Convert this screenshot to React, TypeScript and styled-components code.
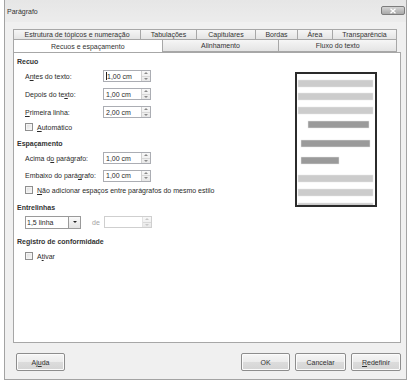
import React from 'react';
import styled, { createGlobalStyle } from 'styled-components';

const Global = createGlobalStyle`
  html, body { margin: 0; padding: 0; background: #ffffff; }
  body {
    font-family: "Liberation Sans", Arial, sans-serif;
    font-size: 7px;
    color: #2a2a2a;
  }
  * { box-sizing: border-box; }
`;

const Screen = styled.div`
  width: 414px;
  height: 383px;
  padding-left: 4px;
  background: #ffffff;
`;

const Window = styled.div`
  width: 403px;
  height: 380px;
  border: 1px solid #a3a3a3;
  border-top: none;
  background: #f0f0f0;
  display: flex;
  flex-direction: column;
`;

const TitleBar = styled.div`
  height: 22px;
  display: flex;
  justify-content: space-between;
  align-items: flex-start;
  padding: 0 1px 0 2px;
  background: linear-gradient(#e6e6e6, #ececec);
`;

const Title = styled.span`
  margin-top: 8px;
  font-size: 7px;
  color: #333;
`;

const CloseButton = styled.div`
  width: 24px;
  height: 9px;
  margin-top: 6px;
  border: 1px solid #7c7c7c;
  border-radius: 2px;
  background: linear-gradient(#d4d4d4, #a9a9a9);
  display: flex;
  align-items: center;
  justify-content: center;
`;

const Client = styled.div`
  flex: 1;
  display: flex;
  flex-direction: column;
  padding: 7px 4px 0 8px;
`;

const TabRow = styled.div`
  display: flex;
  width: 384px;
`;

const Tab = styled.div<{ $w: number; $h: number; $selected?: boolean }>`
  width: ${(p) => p.$w}px;
  height: ${(p) => p.$h}px;
  border: 1px solid #a7a7a7;
  border-bottom: ${(p) => (p.$selected ? 'none' : '1px solid #a7a7a7')};
  margin-left: -1px;
  &:first-child { margin-left: 0; }
  background: ${(p) => (p.$selected ? '#ffffff' : 'linear-gradient(#f6f6f6, #e4e4e4)')};
  display: flex;
  align-items: center;
  justify-content: center;
  font-size: 7px;
  color: #333;
  white-space: nowrap;
  position: relative;
  z-index: ${(p) => (p.$selected ? 2 : 1)};
  margin-bottom: ${(p) => (p.$selected ? '-1px' : '0')};
`;

const FrontRow = styled(TabRow)`
  margin-top: -1px;
`;

const Panel = styled.div`
  width: 388px;
  height: 291px;
  border: 1px solid #a7a7a7;
  background: #ffffff;
  display: flex;
  padding-left: 3px;
`;

const FormColumn = styled.div`
  width: 278px;
  display: flex;
  flex-direction: column;
  padding-top: 2px;
`;

const Header = styled.div<{ $gap?: number }>`
  height: 12px;
  margin-top: ${(p) => p.$gap ?? 0}px;
  display: flex;
  align-items: center;
  font-weight: bold;
  color: #333;
`;

const Row = styled.div<{ $h?: number; $gap?: number }>`
  height: ${(p) => p.$h ?? 18}px;
  margin-top: ${(p) => p.$gap ?? 0}px;
  padding-left: 8px;
  display: flex;
  align-items: center;
`;

const Label = styled.span`
  width: 78px;
  white-space: nowrap;
`;

const U = styled.span`
  text-decoration: underline;
`;

const SpinField = styled.div<{ $disabled?: boolean }>`
  width: 48px;
  height: 12px;
  border: 1px solid ${(p) => (p.$disabled ? '#cfcfcf' : '#abadb3')};
  background: #fff;
  display: flex;
  align-items: center;
`;

const SpinValue = styled.span`
  flex: 1;
  padding-left: 2px;
  display: flex;
  align-items: center;
  white-space: nowrap;
`;

const Caret = styled.span`
  width: 1px;
  height: 8px;
  background: #222;
  margin-right: 0;
`;

const SpinButtons = styled.div<{ $disabled?: boolean }>`
  width: 9px;
  height: 100%;
  border-left: 1px solid ${(p) => (p.$disabled ? '#e2e2e2' : '#d0d0d0')};
  display: flex;
  flex-direction: column;
  background: linear-gradient(#f8f8f8, #e8e8e8);
`;

const SpinHalf = styled.div`
  flex: 1;
  display: flex;
  align-items: center;
  justify-content: center;
  & + & { border-top: 1px solid #d8d8d8; }
`;

const Arrow = styled.span<{ $up?: boolean; $color?: string }>`
  width: 0;
  height: 0;
  border-left: 2px solid transparent;
  border-right: 2px solid transparent;
  ${(p) =>
    p.$up
      ? `border-bottom: 2px solid ${p.$color ?? '#8a8a8a'};`
      : `border-top: 2px solid ${p.$color ?? '#8a8a8a'};`}
`;

const CheckRow = styled(Row)`
  gap: 4px;
`;

const Box = styled.span`
  width: 8px;
  height: 8px;
  border: 1px solid #8f8f8f;
  background: linear-gradient(135deg, #dcdcdc, #fbfbfb);
  box-shadow: inset 0 0 0 1px #f4f4f4;
`;

const Dropdown = styled.div`
  width: 56px;
  height: 13px;
  border: 1px solid #9a9a9a;
  background: #fff;
  display: flex;
  align-items: center;
`;

const DropValue = styled.span`
  flex: 1;
  padding-left: 1px;
`;

const DropButton = styled.div`
  width: 12px;
  height: 100%;
  border-left: 1px solid #9a9a9a;
  background: linear-gradient(#fafafa, #e2e2e2);
  display: flex;
  align-items: center;
  justify-content: center;
`;

const DeLabel = styled.span`
  width: 23px;
  padding-left: 11px;
  color: #a3a3a3;
`;

const PreviewFrame = styled.div`
  width: 82px;
  height: 135px;
  margin-top: 19px;
  border: 2px solid #2b2b2b;
  background: #fff;
  overflow: hidden;
  display: flex;
`;

const Footer = styled.div`
  display: flex;
  align-items: center;
  margin-top: 10px;
  padding-left: 3px;
  width: 388px;
  gap: 5px;
`;

const Button = styled.div<{ $w: number }>`
  width: ${(p) => p.$w}px;
  height: 18px;
  border: 1px solid #8d8d8d;
  border-radius: 2px;
  background: linear-gradient(#f6f6f6 0%, #ebebeb 50%, #dcdcdc 51%, #d4d4d4 100%);
  box-shadow: inset 0 0 0 1px #fbfbfb;
  display: flex;
  align-items: center;
  justify-content: center;
  font-size: 7px;
  color: #333;
`;

const Spacer = styled.div`
  flex: 1;
`;

function Spin({ value, caret, disabled }: { value?: string; caret?: boolean; disabled?: boolean }) {
  return (
    <SpinField $disabled={disabled}>
      <SpinValue>
        {caret && <Caret />}
        {value}
      </SpinValue>
      <SpinButtons $disabled={disabled}>
        <SpinHalf>
          <Arrow $up $color={disabled ? '#c8c8c8' : '#8a8a8a'} />
        </SpinHalf>
        <SpinHalf>
          <Arrow $color={disabled ? '#c8c8c8' : '#8a8a8a'} />
        </SpinHalf>
      </SpinButtons>
    </SpinField>
  );
}

function Preview() {
  const light = '#cccccc';
  const dark = '#9a9a9a';
  const bars: { x: number; y: number; w: number; c: string }[] = [
    { x: 1, y: 6, w: 75, c: light },
    { x: 1, y: 19, w: 75, c: light },
    { x: 1, y: 33, w: 75, c: light },
    { x: 11, y: 47, w: 61, c: dark },
    { x: 4, y: 66, w: 69, c: dark },
    { x: 4, y: 83, w: 38, c: dark },
    { x: 1, y: 101, w: 75, c: light },
    { x: 1, y: 115, w: 75, c: light },
    { x: 1, y: 129, w: 75, c: light },
  ];
  return (
    <PreviewFrame>
      <svg width="78" height="131" viewBox="0 0 78 131">
        {bars.map((b, i) => (
          <rect key={i} x={b.x} y={b.y} width={b.w} height={7} fill={b.c} stroke="#e6e6e6" strokeWidth={0.5} />
        ))}
      </svg>
    </PreviewFrame>
  );
}

export default function App() {
  return (
    <Screen>
      <Global />
      <Window>
        <TitleBar>
          <Title>Parágrafo</Title>
          <CloseButton>
            <svg width="8" height="6" viewBox="0 0 8 6">
              <path d="M1.5 0.8 L6.5 5.2 M6.5 0.8 L1.5 5.2" stroke="#ffffff" strokeWidth="1.3" />
            </svg>
          </CloseButton>
        </TitleBar>
        <Client>
          <TabRow>
            <Tab $w={128} $h={11}>Estrutura de tópicos e numeração</Tab>
            <Tab $w={57} $h={11}>Tabulações</Tab>
            <Tab $w={60} $h={11}>Capitulares</Tab>
            <Tab $w={43} $h={11}>Bordas</Tab>
            <Tab $w={36} $h={11}>Área</Tab>
            <Tab $w={65} $h={11}>Transparência</Tab>
          </TabRow>
          <FrontRow>
            <Tab $w={150} $h={13} $selected>Recuos e espaçamento</Tab>
            <Tab $w={118} $h={13}>Alinhamento</Tab>
            <Tab $w={119} $h={13}>Fluxo do texto</Tab>
          </FrontRow>
          <Panel>
            <FormColumn>
              <Header>Recuo</Header>
              <Row>
                <Label>A<U>n</U>tes do texto:</Label>
                <Spin value="1,00 cm" caret />
              </Row>
              <Row>
                <Label>Depois do te<U>x</U>to:</Label>
                <Spin value="1,00 cm" />
              </Row>
              <Row>
                <Label><U>P</U>rimeira linha:</Label>
                <Spin value="2,00 cm" />
              </Row>
              <CheckRow $h={12}>
                <Box />
                <span><U>A</U>utomático</span>
              </CheckRow>
              <Header $gap={4}>Espaçamento</Header>
              <Row>
                <Label>Acima d<U>o</U> parágrafo:</Label>
                <Spin value="1,00 cm" />
              </Row>
              <Row $h={17}>
                <Label>Embaixo do pará<U>g</U>rafo:</Label>
                <Spin value="1,00 cm" />
              </Row>
              <CheckRow $h={12}>
                <Box />
                <span><U>N</U>ão adicionar espaços entre parágrafos do mesmo estilo</span>
              </CheckRow>
              <Header $gap={5}>Entrelinhas</Header>
              <Row>
                <Dropdown>
                  <DropValue>1,5 linha</DropValue>
                  <DropButton>
                    <Arrow $color="#222" />
                  </DropButton>
                </Dropdown>
                <DeLabel>de</DeLabel>
                <Spin disabled />
              </Row>
              <Header $gap={4}>Registro de conformidade</Header>
              <CheckRow $h={12} $gap={3}>
                <Box />
                <span>A<U>t</U>ivar</span>
              </CheckRow>
            </FormColumn>
            <Preview />
          </Panel>
          <Footer>
            <Button $w={49}>Aj<U>u</U>da</Button>
            <Spacer />
            <Button $w={49}>OK</Button>
            <Button $w={51}>Cancelar</Button>
            <Button $w={50}><U>R</U>edefinir</Button>
          </Footer>
        </Client>
      </Window>
    </Screen>
  );
}
